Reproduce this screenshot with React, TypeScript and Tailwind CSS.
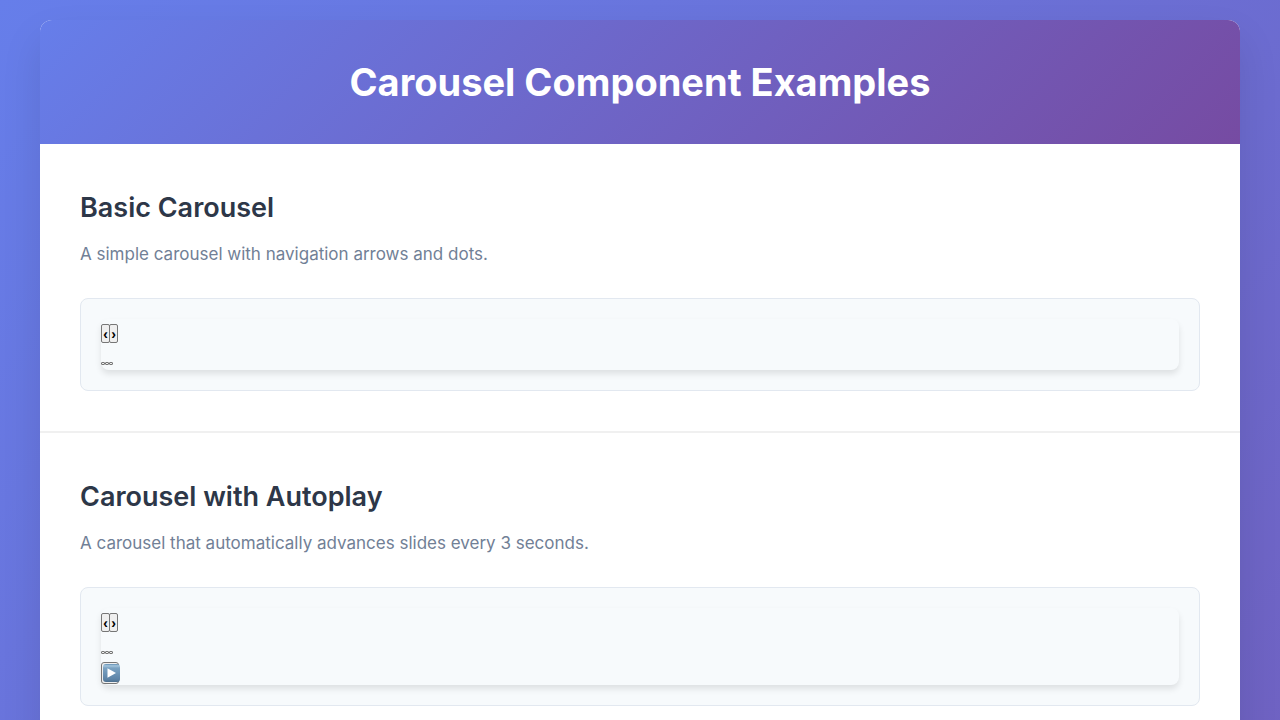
import React from "react";

type CarouselProps = { autoplay?: boolean };

function Carousel({ autoplay = false }: CarouselProps) {
  const arrow =
    "flex h-[19px] w-[9px] items-center justify-center rounded-[2px] border border-[#767676] bg-[#efefef] font-['Liberation_Sans',sans-serif] text-black";
  const dot = "h-[3px] w-1 rounded-[1px] border border-[#767676] bg-[#efefef]";
  return (
    <div className="rounded-lg shadow-[0_4px_6px_rgba(0,0,0,0.1)]">
      <div className="flex h-[26px] items-end -space-x-px pb-0.5">
        <button aria-label="Previous slide" className={arrow}>
          <span className="text-sm leading-none font-bold">‹</span>
        </button>
        <button aria-label="Next slide" className={arrow}>
          <span className="text-sm leading-none font-bold">›</span>
        </button>
      </div>
      <div className="flex h-[25px] items-end pb-[5px]">
        <button aria-label="Slide 1" className={dot} />
        <button aria-label="Slide 2" className={dot} />
        <button aria-label="Slide 3" className={dot} />
      </div>
      {autoplay && (
        <div className="flex h-[26px] items-end pb-px">
          <button
            aria-label="Start autoplay"
            className="flex h-[22px] w-[18px] items-center rounded-[3px] border border-[#767676] bg-[#efefef] pl-px"
          >
            <svg viewBox="0 0 17 18" className="h-[18px] w-[17px] shrink-0" aria-hidden="true">
              <defs>
                <linearGradient id="play-face" x1="0" y1="0" x2="0" y2="1">
                  <stop offset="0" stopColor="#5f8db3" />
                  <stop offset="0.1" stopColor="#a5c6dd" />
                  <stop offset="0.22" stopColor="#7ba3c3" />
                  <stop offset="0.85" stopColor="#5d83a6" />
                  <stop offset="1" stopColor="#4a6d8c" />
                </linearGradient>
              </defs>
              <rect width="17" height="18" rx="3" fill="url(#play-face)" />
              <path d="M4.500 4.200v9.600l8.500-4.800z" fill="#fff" />
            </svg>
          </button>
        </div>
      )}
    </div>
  );
}

type ExampleProps = { title: string; description: string; autoplay?: boolean };

function Example({ title, description, autoplay }: ExampleProps) {
  return (
    <section className="border-b-2 border-[#f0f0f0] p-10">
      <h2 className="mb-2 text-[27px] leading-[48px] font-semibold text-[#2d3748]">{title}</h2>
      <p className="mb-[30px] text-[17px] leading-7 text-[#718096]">{description}</p>
      <div className="rounded-lg border border-[#e2e8f0] bg-[#f7fafc] p-5">
        <Carousel autoplay={autoplay} />
      </div>
    </section>
  );
}

export default function App() {
  return (
    <div className="min-h-screen bg-[linear-gradient(135deg,#667eea_0%,#6f62c2_100%)] px-10 pt-5 font-['Inter','Liberation_Sans',sans-serif]">
      <main className="mx-auto max-w-[1200px] overflow-hidden rounded-t-xl bg-white shadow-[0_20px_40px_rgba(0,0,0,0.1)]">
        <header className="bg-[linear-gradient(135deg,#667eea_0%,#764ba2_100%)] px-10 py-[30px] text-center text-white">
          <h1 className="text-[38px] leading-[64px] font-bold">Carousel Component Examples</h1>
        </header>
        <Example title="Basic Carousel" description="A simple carousel with navigation arrows and dots." />
        <Example
          title="Carousel with Autoplay"
          description="A carousel that automatically advances slides every 3 seconds."
          autoplay
        />
      </main>
    </div>
  );
}
